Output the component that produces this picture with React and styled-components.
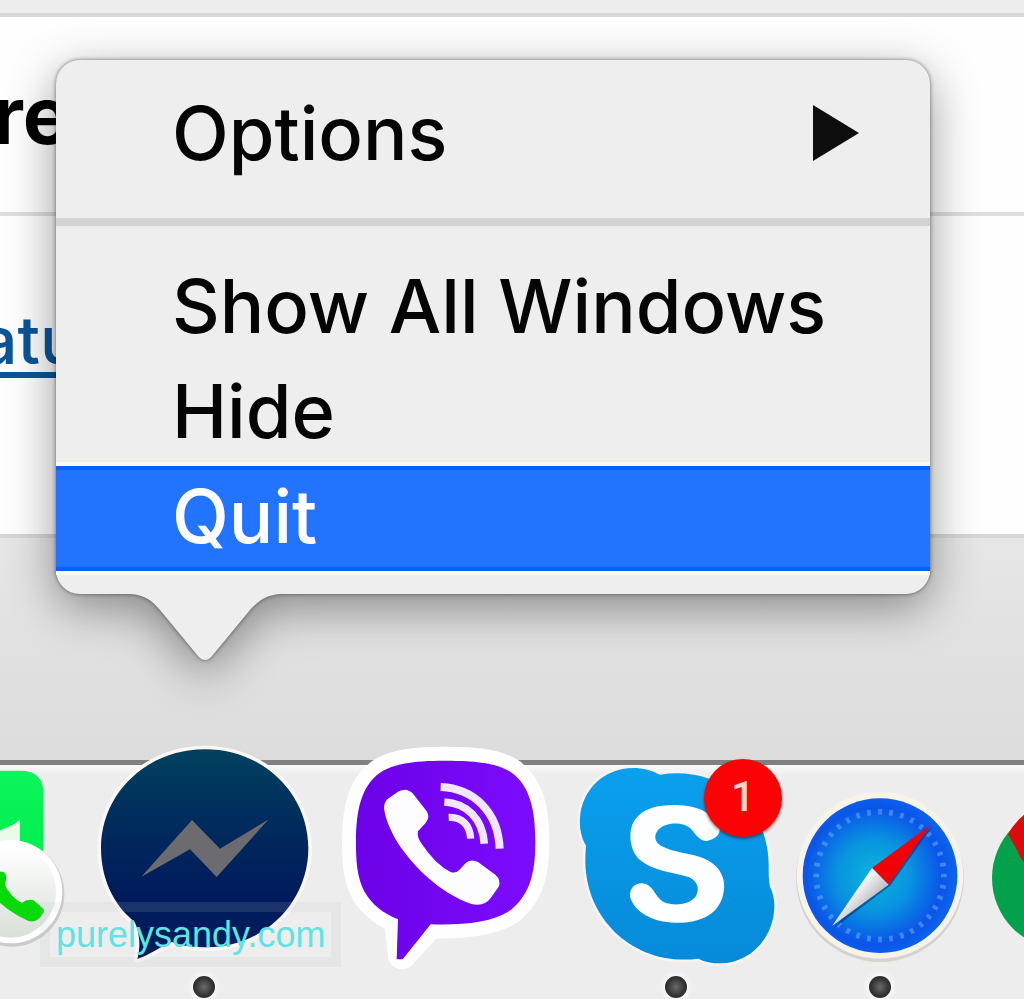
import React from "react";
import styled, { createGlobalStyle } from "styled-components";

const ticks = Array.from({ length: 36 }, (_, i) => i * 10);

const WhatsAppIcon = () => (
  <svg width="84" height="230" viewBox="0 0 252 690" aria-hidden="true">
    <defs>
      <linearGradient id="waGreen" x1="0" y1="0" x2="0" y2="1">
        <stop offset="0" stopColor="#0bf55c" />
        <stop offset="1" stopColor="#00ee4c" />
      </linearGradient>
      <linearGradient id="waDisc" x1="0" y1="0" x2="0" y2="1">
        <stop offset="0" stopColor="#ffffff" />
        <stop offset="1" stopColor="#d9dfd9" />
      </linearGradient>
    </defs>
    <path d="M-60 92H62Q130 92 130 160V360H-60Z" fill="url(#waGreen)" />
    <path d="M-20 276Q40 262 60 238V330H-20Z" fill="#e9fbe9" />
    <circle cx="35" cy="462" r="158" fill="#000" opacity="0.14" />
    <circle cx="32" cy="455" r="155" fill="#fff" />
    <circle cx="30" cy="455" r="138" fill="url(#waDisc)" />
    <path
      d="M-30 395H8Q22 402 18 420Q12 440 28 456Q42 478 66 488Q80 476 100 480L130 506Q136 514 124 528Q108 550 84 542Q30 520 -30 462Z"
      fill="#08d908"
    />
  </svg>
);

const MessengerIcon = () => (
  <svg width="216" height="230" viewBox="288 0 648 690" aria-hidden="true">
    <defs>
      <linearGradient id="msgBlue" x1="0" y1="0" x2="0" y2="1">
        <stop offset="0" stopColor="#00415f" />
        <stop offset="0.35" stopColor="#002b5c" />
        <stop offset="0.7" stopColor="#001b5c" />
        <stop offset="1" stopColor="#001c5a" />
      </linearGradient>
    </defs>
    <path
      d="M615 28C790 28 925 160 925 325C925 490 790 622 620 622C585 622 548 618 516 606C480 620 450 645 412 657C422 620 420 580 404 546C340 495 303 415 303 325C303 160 440 28 615 28Z"
      fill="url(#msgBlue)"
      stroke="#fbf7f5"
      strokeWidth="22"
      paintOrder="stroke"
      strokeLinejoin="round"
    />
    <path d="M424 410L576 240L660 326L806 238L650 411L570 328Z" fill="#6b6b70" />
  </svg>
);

const ViberIcon = () => (
  <svg width="236" height="230" viewBox="-18 0 708 690" aria-hidden="true">
    <defs>
      <linearGradient id="viberPurple" x1="0" y1="0" x2="1" y2="0">
        <stop offset="0" stopColor="#6c00e6" />
        <stop offset="1" stopColor="#7c0cff" />
      </linearGradient>
    </defs>
    <path
      d="M345 62C430 62 500 68 545 98C600 138 616 210 616 305C616 400 600 460 545 508C490 548 400 556 302 553L216 646L204 538C160 520 126 494 104 456C80 410 78 360 78 305C78 210 94 138 150 98C195 68 265 62 345 62Z"
      fill="#fefefe"
      stroke="#fefefe"
      strokeWidth="84"
      strokeLinejoin="round"
    />
    <path
      d="M345 62C430 62 500 68 545 98C600 138 616 210 616 305C616 400 600 460 545 508C490 548 400 556 302 553L218 658H200L204 538C160 520 126 494 104 456C80 410 78 360 78 305C78 210 94 138 150 98C195 68 265 62 345 62Z"
      fill="url(#viberPurple)"
    />
    <path
      d="M174 176L206 154Q230 142 248 160L290 214Q302 232 286 250L264 274Q260 290 274 310Q318 376 362 396Q378 402 390 388L408 368Q424 356 444 366L496 404Q514 420 506 440L482 474Q464 500 424 492C330 460 250 380 204 310C180 270 166 236 162 204Q162 186 174 176Z"
      fill="#fdfcff"
    />
    <g fill="none" stroke="#f2e6ff" strokeLinecap="butt">
      <path d="M332 141C430 145 505 215 509 326" strokeWidth="24" />
      <path d="M343 186C410 190 458 235 463 311" strokeWidth="23" />
      <path d="M356 232C395 230 420 255 422 296" strokeWidth="22" />
    </g>
  </svg>
);

const SkypeIcon = () => (
  <svg width="208" height="230" viewBox="36 0 624 690" aria-hidden="true">
    <defs>
      <linearGradient id="skypeBlue" x1="0" y1="0" x2="0" y2="1">
        <stop offset="0" stopColor="#0aa0ee" />
        <stop offset="1" stopColor="#058ad8" />
      </linearGradient>
    </defs>
    <path
      d="M220 84C250 84 275 91 300 104C480 75 628 200 626 380C626 400 626 422 630 440C644 468 646 500 640 530C625 610 560 670 480 670C455 670 435 666 415 656C230 680 78 545 76 365Q76 340 78 318C62 290 58 262 60 234C66 150 130 84 220 84Z"
      fill="url(#skypeBlue)"
      stroke="#f9f3f1"
      strokeWidth="16"
      paintOrder="stroke"
    />
    <path
      d="M450 300C424 312 408 284 394 268C376 250 350 249 330 252C290 258 274 292 296 312C330 340 410 338 448 364C490 390 500 430 488 470C470 530 410 550 344 548C280 546 224 518 210 470C208 440 232 424 258 432C284 442 288 480 320 490C350 498 392 492 408 468C420 446 412 424 388 412C340 396 280 394 240 360C206 330 204 270 224 240C250 202 300 194 350 195C410 196 450 216 474 250C488 272 474 294 450 300Z"
      fill="#fdfeff"
    />
  </svg>
);

const SafariIcon = () => (
  <svg width="176" height="230" viewBox="36 0 528 690" aria-hidden="true">
    <defs>
      <radialGradient id="safariSea" cx="0.46" cy="0.5" r="0.52">
        <stop offset="0" stopColor="#08b4dc" />
        <stop offset="0.45" stopColor="#0894e0" />
        <stop offset="0.85" stopColor="#0a55e8" />
        <stop offset="1" stopColor="#0c62ec" />
      </radialGradient>
      <linearGradient id="safariNeedle" x1="0" y1="0" x2="1" y2="1">
        <stop offset="0.35" stopColor="#ffffff" />
        <stop offset="0.7" stopColor="#aeb0b4" />
      </linearGradient>
    </defs>
    <circle cx="300" cy="414" r="252" fill="#c9c5bf" opacity="0.65" />
    <circle cx="300" cy="406" r="250" fill="#f8f3e8" />
    <circle cx="300" cy="407" r="232" fill="url(#safariSea)" />
    {ticks.map((angle) => (
      <path
        key={angle}
        d="M300 207V224"
        stroke="#73b4ff"
        strokeWidth="11"
        opacity="0.5"
        transform={`rotate(${angle} 300 407)`}
      />
    ))}
    <path d="M456 260L332 436L158 568L174 548Z" fill="#06307c" opacity="0.6" />
    <path d="M452 254L326 434L276 384Z" fill="#f20008" />
    <path d="M276 384L326 434L156 558Z" fill="url(#safariNeedle)" />
  </svg>
);

const ChromeIcon = () => (
  <svg width="44" height="230" viewBox="600 0 132 690" aria-hidden="true">
    <circle cx="850" cy="414" r="214" fill="#04a14c" />
    <path d="M684 282Q704 246 740 218V376Q722 360 712 332Z" fill="#dc0a0a" />
  </svg>
);

const apps = [
  { name: "WhatsApp", icon: WhatsAppIcon },
  { name: "Messenger", icon: MessengerIcon, running: true },
  { name: "Viber", icon: ViberIcon },
  { name: "Skype", icon: SkypeIcon, running: true, badge: 1 },
  { name: "Safari", icon: SafariIcon, running: true },
  { name: "Chrome", icon: ChromeIcon },
];

const App = () => {
  return (
    <>
      <GlobalStyle />
      <Page>
        <Toolbar />
        <HeadingRow>
          <Heading>re</Heading>
        </HeadingRow>
        <LinkRow>
          <TextLink href="#features">atu</TextLink>
        </LinkRow>
        <Desktop />
        <Dock>
          {apps.map(({ name, icon: Icon, running, badge }) => (
            <DockItem key={name} type="button" aria-label={name}>
              <Icon />
              {badge && <Badge>{badge}</Badge>}
              {running && <RunningDot />}
            </DockItem>
          ))}
        </Dock>

        <ContextMenu>
          <MenuPanel>
            <MenuItem type="button">
              Options
              <svg width="46" height="56" viewBox="0 0 46 56" aria-hidden="true">
                <path d="M0 0L46 28L0 56Z" fill="#0e0e0e" />
              </svg>
            </MenuItem>
            <Divider />
            <MenuItem type="button">Show All Windows</MenuItem>
            <MenuItem type="button">Hide</MenuItem>
            <MenuItem type="button" $active>
              Quit
            </MenuItem>
          </MenuPanel>
          <Tail width="150" height="70" viewBox="0 0 150 70" aria-hidden="true">
            <path
              d="M0 0V2C16 3 22 9 30 18L68 64Q75 72 82 64L120 18C130 7 138 3 150 2V0Z"
              fill="#eeeeee"
            />
          </Tail>
        </ContextMenu>

        <Watermark>purelysandy.com</Watermark>
      </Page>
    </>
  );
};

export default App;

const GlobalStyle = createGlobalStyle`
  * {
    box-sizing: border-box;
  }
  body {
    margin: 0;
    font-family: Inter, "Liberation Sans", sans-serif;
  }
`;

const Page = styled.main`
  position: relative;
  display: flex;
  flex-direction: column;
  min-height: 100vh;
  overflow: hidden;
  background: #fefefe;
`;

const Toolbar = styled.header`
  height: 17px;
  background: #ededed;
  border-bottom: 4px solid #d8d8d8;
`;

const HeadingRow = styled.section`
  height: 199px;
  padding-top: 48px;
  border-bottom: 4px solid #dedede;
`;

const Heading = styled.h1`
  margin: 0 0 0 -8px;
  font-size: 80px;
  line-height: 100px;
  font-weight: 700;
  color: #000;
`;

const LinkRow = styled.section`
  height: 318px;
  padding-top: 84px;
`;

const TextLink = styled.a`
  display: inline-block;
  margin-left: -20px;
  font-size: 66px;
  font-weight: 500;
  line-height: 80px;
  color: #0a5599;
  text-decoration-thickness: 6px;
  text-underline-offset: 8px;
`;

const Desktop = styled.div`
  flex: 1;
  min-height: 226px;
  border-top: 4px solid #d6d6d6;
  background: linear-gradient(#e6e6e6, #dcdcdc);
`;

const Dock = styled.nav`
  display: flex;
  justify-content: space-between;
  height: 239px;
  border-top: 5px solid #808080;
  background: linear-gradient(#fafafa, #ededed 10px);
`;

const DockItem = styled.button`
  position: relative;
  display: flex;
  flex-direction: column;
  align-items: center;
  gap: 6px;
  margin: -25px 0 0;
  padding: 0;
  border: 0;
  background: none;

  svg {
    display: block;
  }
`;

const Badge = styled.span`
  position: absolute;
  top: 19px;
  right: -2px;
  width: 78px;
  height: 78px;
  border-radius: 50%;
  background: #fb0204;
  box-shadow: 0 2px 3px rgba(60, 0, 0, 0.5);
  color: #ffd0d0;
  font: 500 42px/76px Roboto, sans-serif;
  text-align: center;
`;

const RunningDot = styled.span`
  width: 22px;
  height: 22px;
  border-radius: 50%;
  background: radial-gradient(#6a6a6a, #303030 60%);
  box-shadow: 0 0 4px 3px #f8f8f8;
`;

const ContextMenu = styled.div`
  position: absolute;
  top: 60px;
  left: 56px;
  right: 94px;
  filter: drop-shadow(0 0 2px rgba(0, 0, 0, 0.5))
    drop-shadow(0 14px 24px rgba(0, 0, 0, 0.4));
`;

const MenuPanel = styled.div`
  padding: 23px 0;
  border-radius: 24px;
  background: #eeeeee;
`;

const MenuItem = styled.button`
  display: flex;
  align-items: center;
  justify-content: space-between;
  width: 100%;
  height: 105px;
  padding: 0 71px 6px 116px;
  border: 0;
  background: ${({ $active }) => ($active ? "#2274ff" : "none")};
  box-shadow: ${({ $active }) =>
    $active ? "0 -4px #fbf9ee, 0 4px #fbf9ee, inset 0 4px #0860fa, inset 0 -4px #0860fa" : "none"};
  color: ${({ $active }) => ($active ? "#fff" : "#050505")};
  font-family: inherit;
  font-size: 74px;
  font-weight: 500;
  line-height: 100px;
  text-align: left;
`;

const Divider = styled.hr`
  height: 8px;
  margin: 30px 0;
  border: 0;
  background: #d3d3d3;
`;

const Tail = styled.svg`
  display: block;
  margin: -2px 0 0 74px;
`;

const Watermark = styled.div`
  position: absolute;
  left: 40px;
  bottom: 32px;
  padding: 0 6px;
  border: 10px solid rgba(185, 195, 198, 0.14);
  color: #5fe3e3;
  font: 36px/45px "Liberation Sans", sans-serif;
`;
